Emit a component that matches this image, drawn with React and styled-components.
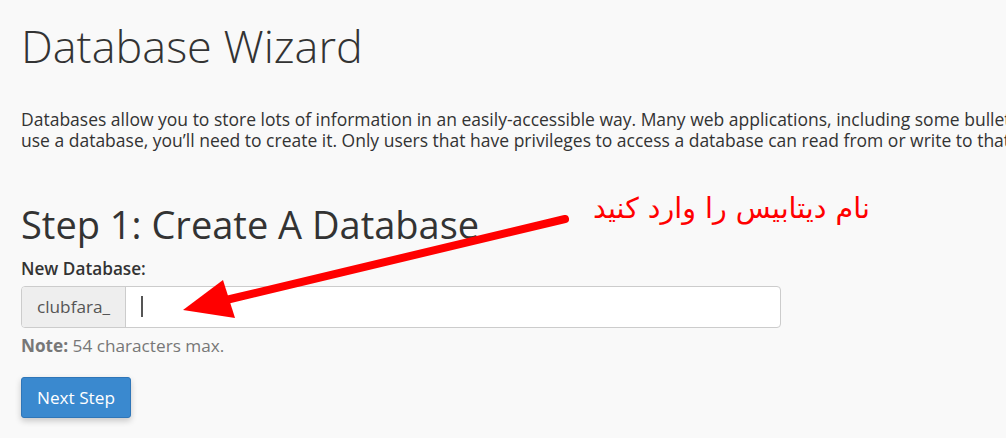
import styled, { createGlobalStyle } from 'styled-components';

const GlobalStyle = createGlobalStyle`
  html, body {
    margin: 0;
    padding: 0;
    background: #f9f9f9;
    overflow: hidden;
  }
  body {
    font-family: "Open Sans", "DejaVu Sans", sans-serif;
    color: #333;
  }
`;

const Page = styled.div`
  position: relative;
  width: 1006px;
  height: 438px;
  padding: 0 21px;
  box-sizing: border-box;
  overflow: hidden;
`;

const Title = styled.h1`
  margin: 21px 0 0;
  font-size: 45px;
  line-height: 50px;
  font-weight: 300;
  color: #333;
`;

const Intro = styled.p`
  margin: 37.5px 0 0;
  font-size: 17.5px;
  line-height: 21px;
  white-space: nowrap;
`;

const StepTitle = styled.h2`
  margin: 52px 0 0;
  font-size: 38px;
  line-height: 42px;
  font-weight: 400;
`;

const Label = styled.label`
  display: block;
  margin-top: 13px;
  font-size: 17.2px;
  line-height: 21px;
  font-weight: 600;
`;

const InputGroup = styled.div`
  display: flex;
  width: 760px;
  height: 42px;
  margin-top: 7px;
  box-sizing: border-box;
  border: 1px solid #ccc;
  border-radius: 4px;
  background: #fff;
  overflow: hidden;
`;

const Addon = styled.span`
  display: flex;
  align-items: center;
  padding: 0 15px;
  background: #eee;
  border-right: 1px solid #ccc;
  font-size: 17.2px;
  color: #555;
`;

const Field = styled.div`
  flex: 1;
  display: flex;
  align-items: center;
  padding-left: 15px;
`;

const Caret = styled.span`
  width: 2px;
  height: 21px;
  background: #555;
`;

const Note = styled.p`
  margin: 7px 0 0;
  font-size: 17.2px;
  line-height: 21px;
  color: #777;

  strong {
    font-weight: 700;
  }
`;

const Button = styled.button`
  margin-top: 21px;
  height: 41px;
  padding: 0 15px;
  font-family: inherit;
  font-size: 17.2px;
  color: #fff;
  background: #3a89cf;
  border: 1px solid #2f76b8;
  border-radius: 3px;
  box-shadow: 0 3px 6px rgba(0, 0, 0, 0.2);
`;

const Annotation = styled.svg`
  position: absolute;
  left: 0;
  top: 0;
  pointer-events: none;
`;

const Hint = styled.div`
  position: absolute;
  left: 593px;
  top: 192px;
  font-family: "DejaVu Sans", sans-serif;
  font-size: 28.5px;
  line-height: 34px;
  color: #f00;
  direction: rtl;
  white-space: nowrap;
`;

export default function App() {
  return (
    <Page>
      <GlobalStyle />
      <Title>Database Wizard</Title>
      <Intro>
        Databases allow you to store lots of information in an easily-accessible way. Many web applications, including some bulletin boards, content management systems, and online retail shops, require database access. To
        <br />
        use a database, you’ll need to create it. Only users that have privileges to access a database can read from or write to that database.
      </Intro>
      <StepTitle>Step 1: Create A Database</StepTitle>
      <Label>New Database:</Label>
      <InputGroup>
        <Addon>clubfara_</Addon>
        <Field>
          <Caret />
        </Field>
      </InputGroup>
      <Note>
        <strong>Note:</strong> 54 characters max.
      </Note>
      <Button>Next Step</Button>

      <Annotation width="1006" height="438" viewBox="0 0 1006 438">
        <line x1="565" y1="219" x2="226" y2="300" stroke="#f00" strokeWidth="8" strokeLinecap="round" />
        <polygon points="183,310 223,280 235,318" fill="#f00" />
      </Annotation>
      <Hint>نام دیتابیس را وارد کنید</Hint>
    </Page>
  );
}
